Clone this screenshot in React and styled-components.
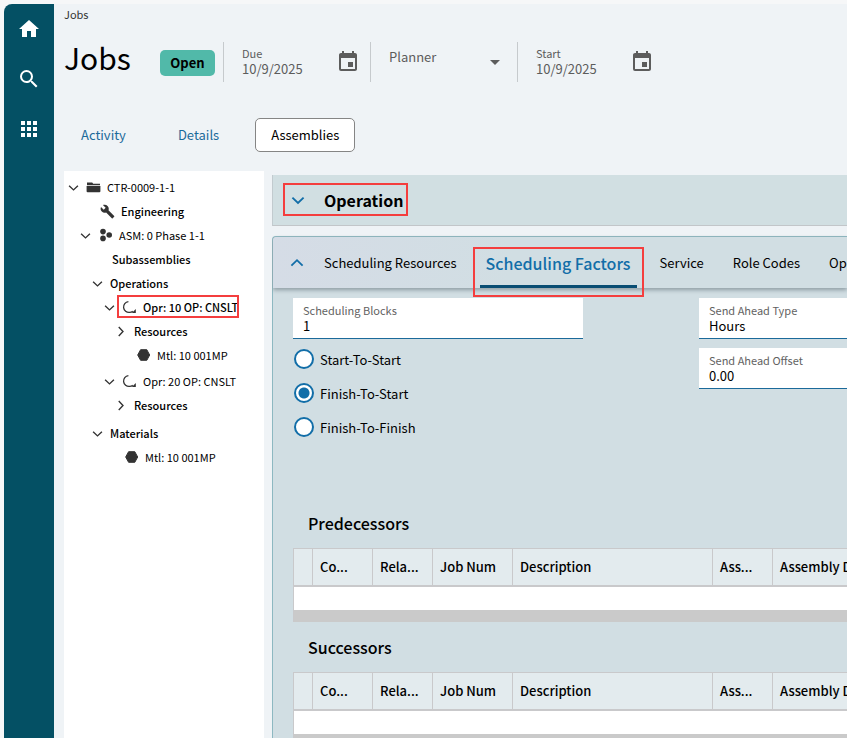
import React, { useState } from "react";
import styled, { createGlobalStyle, css } from "styled-components";
import { MdHome, MdSearch, MdApps, MdEvent, MdArrowDropDown, MdBuild } from "react-icons/md";

const GlobalStyle = createGlobalStyle`
  *, *::before, *::after { box-sizing: border-box; }
  body {
    margin: 0;
    background: #f6f7f8;
    color: #000;
    font-family: "Noto Sans CJK SC", "Noto Sans", sans-serif;
    font-size: 13px;
    line-height: 16px;
  }
  button, input, select { font: inherit; color: inherit; margin: 0; }
  button { cursor: pointer; }
`;

const Shell = styled.div`
  display: flex;
  height: 100vh;
  padding: 4px 0 0 4px;
  overflow: hidden;
`;

const Rail = styled.nav`
  flex: 0 0 50px;
  display: flex;
  flex-direction: column;
  align-items: center;
  gap: 26px;
  padding-top: 13px;
  background: #045064;
  border-top-left-radius: 8px;
`;

const RailButton = styled.button`
  display: flex;
  padding: 0;
  border: 0;
  background: none;
  color: #fff;
`;

const Page = styled.main`
  flex: 1;
  min-width: 0;
  display: flex;
  flex-direction: column;
  padding-left: 10px;
  background: #eff3f6;
`;

const Breadcrumb = styled.a`
  align-self: flex-start;
  font-size: 11px;
  line-height: 20px;
  color: #333;
  text-decoration: none;
`;

const Header = styled.header`
  display: flex;
  align-items: center;
  height: 74px;
  padding-top: 2px;
`;

const Title = styled.h1`
  margin: 0;
  width: 96px;
  font-size: 30px;
  font-weight: 400;
  line-height: 40px;
  padding-bottom: 10px;
`;

const Status = styled.span`
  width: 55px;
  margin: 2px 8px 0 0;
  border-radius: 5px;
  background: #51b9a9;
  font-weight: 700;
  line-height: 26px;
  text-align: center;
`;

const HeaderField = styled.div`
  display: flex;
  align-items: center;
  justify-content: space-between;
  width: 147px;
  height: 40px;
  padding: 0 10px 0 18px;
  border-left: 1px solid #c6cacd;
  color: #5c5c5c;
`;

const HeaderText = styled.div`
  flex: 1;
  min-width: 0;
  align-self: flex-start;
  padding-top: 4px;
`;

const HeaderLabel = styled.label`
  display: block;
  font-size: ${(p) => (p.$large ? 13 : 11)}px;
  line-height: ${(p) => (p.$large ? 22 : 15)}px;
`;

const BareInput = styled.input`
  display: block;
  width: 100%;
  height: 16px;
  padding: 0;
  border: 0;
  outline: 0;
  background: none;
  line-height: 16px;
`;

const PlannerSelect = styled.select`
  width: 24px;
  height: 24px;
  padding: 0;
  border: 0;
  appearance: none;
  background: none;
  grid-area: 1 / 1;
`;

const SelectWrap = styled.span`
  display: grid;
  place-items: center;
  width: 24px;
  svg { grid-area: 1 / 1; pointer-events: none; }
`;

const PlainButton = styled.button`
  display: flex;
  flex: none;
  padding: 0;
  border: 0;
  background: none;
  color: ${(p) => p.$color || "#5c5c5c"};
`;

const PageTabs = styled.nav`
  display: flex;
  gap: 20px;
  margin: 20px 0 19px;
  padding-left: 1px;
`;

const PageTab = styled.button`
  height: 34px;
  padding: 0 15px;
  border: 1px solid transparent;
  border-radius: 5px;
  background: none;
  color: #1b6a9a;
  ${(p) => p.$active && css`
    border-color: #858585;
    background: #fff;
    color: #000;
  `}
`;

const Workspace = styled.div`
  flex: 1;
  min-height: 0;
  display: flex;
  gap: 8px;
`;

const Tree = styled.ul`
  flex: 0 0 200px;
  margin: 0;
  padding: 4px 0 0;
  list-style: none;
  background: #fff;
  font-size: 11px;
`;

const TreeRow = styled.li`
  display: flex;
  align-items: center;
  height: 24px;
  margin-top: ${(p) => p.$space || 0}px;
  padding-left: ${(p) => p.$level * 12}px;
  font-weight: ${(p) => (p.$bold ? 500 : 400)};
  white-space: nowrap;
`;

const Toggle = styled.button`
  display: flex;
  justify-content: center;
  flex: 0 0 18px;
  margin-right: 4px;
  padding: 0;
  border: 0;
  background: none;
  color: #333;
`;

const NodeLabel = styled.span`
  position: relative;
  display: flex;
  align-items: center;
  gap: 6px;
  color: #000;
  svg { flex: none; color: #333; }
`;

const Highlight = styled.span`
  position: absolute;
  inset: ${(p) => p.$inset};
  border: 2px solid #f43e3e;
  pointer-events: none;
`;

const Content = styled.div`
  flex: 1;
  min-width: 0;
  display: flex;
  flex-direction: column;
  gap: 10px;
  padding-top: 4px;
  overflow: hidden;
`;

const OperationPanel = styled.section`
  flex: none;
  display: flex;
  align-items: center;
  height: 51px;
  border-left: 1px solid #c2cbcf;
  border-bottom: 1px solid #c2c6c9;
  background: #d1dfe2;
`;

const OperationHead = styled.div`
  position: relative;
  display: flex;
  align-items: center;
  gap: 19px;
  margin-left: 18px;
`;

const OperationTitle = styled.h2`
  margin: 0;
  font-size: 16px;
  font-weight: 700;
  line-height: 24px;
`;

const DetailPanel = styled.section`
  flex: none;
  border: solid #8db8c1;
  border-width: 1px 0 0 1px;
  border-top-left-radius: 4px;
  background: #d1dee3;
`;

const TabStrip = styled.div`
  display: flex;
  align-items: center;
  height: 51px;
  padding-left: 17px;
  border-top-left-radius: 4px;
  background: linear-gradient(90deg, #d5dce6, #d1dee3 240px);
  box-shadow: 0 2px 4px #8c9ba2;
  white-space: nowrap;
`;

const TabList = styled.div`
  display: flex;
  align-items: stretch;
  gap: 17px;
  height: 51px;
  margin-left: 14px;
`;

const Tab = styled.button`
  position: relative;
  flex: none;
  padding: 3px 6px 0;
  border: 0;
  border-bottom: 3px solid transparent;
  background: none;
  ${(p) => p.$active && css`
    border-bottom-color: #084d73;
    color: #126ea8;
    font-size: 16px;
    font-weight: 500;
  `}
`;

const FieldGrid = styled.div`
  display: grid;
  grid-template-columns: 290px minmax(148px, 1fr);
  column-gap: 116px;
  min-height: 210px;
  padding: 10px 0 0 20px;
`;

const Stack = styled.div`
  display: flex;
  flex-direction: column;
  gap: ${(p) => p.$gap}px;
`;

const Field = styled.div`
  height: 41px;
  padding: 4px 10px 0;
  border-bottom: 1px solid #1b6a9a;
  background: #fff;
  label {
    display: block;
    font-size: 11px;
    line-height: 16px;
    color: #626262;
  }
`;

const RadioRow = styled.label`
  display: flex;
  align-items: center;
  gap: 6px;
  height: 20px;
  padding-left: 1px;
  span { padding-top: 2px; }
`;

const Radio = styled.input`
  appearance: none;
  flex: none;
  width: 20px;
  height: 20px;
  border: 2px solid #126ea8;
  border-radius: 50%;
  background: #fff;
  &:checked { background: radial-gradient(circle, #126ea8 5px, #fff 6px); }
`;

const GridTitle = styled.h3`
  margin: 0;
  padding-left: 35px;
  font-size: 16px;
  font-weight: 500;
  line-height: 50px;
`;

const GridWrap = styled.div`
  margin-left: 20px;
  border: solid #c9c9cb;
  border-width: 1px 0 0 1px;
  overflow: hidden;
`;

const GridTable = styled.table`
  width: 100%;
  min-width: 680px;
  table-layout: fixed;
  border-collapse: separate;
  border-spacing: 0;
  background: #fff;
  th {
    height: 38px;
    padding: 0 0 0 7px;
    border-right: 1px solid #c9c9cb;
    border-bottom: 2px solid #c9c9cb;
    background: #e3ebee;
    font-weight: 500;
    text-align: left;
    white-space: nowrap;
  }
  td { height: 23px; padding: 0; }
`;

const ScrollTrack = styled.div`
  height: 12px;
  background: #cacaca;
`;

function Chevron({ dir = "down", size = 14, weight = 1.6 }) {
  const points = { down: "1.2,4 6,8.6 10.8,4", up: "1.2,8.2 6,3.6 10.8,8.2", right: "3,1.2 7.6,6 3,10.8" }[dir];
  return (
    <svg width={size} height={size} viewBox="0 0 12 12" fill="none" stroke="currentColor" strokeWidth={weight}>
      <polyline points={points} />
    </svg>
  );
}

const icons = {
  folder: (
    <svg width="15" height="14" viewBox="0 0 15 14" fill="currentColor">
      <path d="M1 2.5h5.2l1 1.2H14v1.6H1zM.6 6h13.8v5.2a1 1 0 0 1-1 1H1.6a1 1 0 0 1-1-1z" />
    </svg>
  ),
  wrench: <MdBuild size={15} />,
  assembly: (
    <svg width="15" height="14" viewBox="0 0 15 14" fill="currentColor">
      <circle cx="5" cy="3.6" r="2.8" />
      <circle cx="5" cy="10.4" r="2.8" />
      <circle cx="11.2" cy="7" r="2.8" />
    </svg>
  ),
  operation: (
    <svg width="15" height="14" viewBox="0 0 15 14" fill="none" stroke="currentColor" strokeWidth="1.3">
      <path d="M6.4 1.6A5.3 5.3 0 0 0 7.6 12.4q1.8 0 3.2-1" />
      <path d="M13.8 9v4H9.8z" fill="currentColor" stroke="none" />
    </svg>
  ),
  material: (
    <svg width="15" height="14" viewBox="0 0 15 14" fill="currentColor" stroke="currentColor" strokeLinejoin="round">
      <polygon points="4.6,1.7 10.8,1.7 13.7,7 10.8,12.3 4.6,12.3 1.7,7" />
    </svg>
  ),
};

const nodes = [
  { label: "CTR-0009-1-1", level: 0, icon: "folder", dir: "down" },
  { label: "Engineering", level: 3, icon: "wrench", bold: true },
  { label: "ASM: 0 Phase 1-1", level: 1, icon: "assembly", dir: "down" },
  { label: "Subassemblies", level: 4, bold: true },
  { label: "Operations", level: 2, dir: "down", bold: true },
  { label: "Opr: 10 OP: CNSLT", level: 3, icon: "operation", dir: "down", bold: true, marked: true },
  { label: "Resources", level: 4, dir: "right", bold: true },
  { label: "Mtl: 10 001MP", level: 6, icon: "material" },
  { label: "Opr: 20 OP: CNSLT", level: 3, icon: "operation", dir: "down", space: 2 },
  { label: "Resources", level: 4, dir: "right", bold: true },
  { label: "Materials", level: 2, dir: "down", bold: true, space: 4 },
  { label: "Mtl: 10 001MP", level: 5, icon: "material" },
];

const columns = [
  { label: "", width: 19 },
  { label: "Co...", width: 60 },
  { label: "Rela...", width: 60 },
  { label: "Job Num", width: 80 },
  { label: "Description", width: 200 },
  { label: "Ass...", width: 60 },
  { label: "Assembly Description" },
];

function DateField({ id, label, value }) {
  return (
    <HeaderField>
      <HeaderText>
        <HeaderLabel htmlFor={id}>{label}</HeaderLabel>
        <BareInput id={id} defaultValue={value} />
      </HeaderText>
      <PlainButton aria-label={`Pick ${label} date`}>
        <MdEvent size={24} />
      </PlainButton>
    </HeaderField>
  );
}

function TextField({ id, label, value }) {
  return (
    <Field>
      <label htmlFor={id}>{label}</label>
      <BareInput id={id} defaultValue={value} />
    </Field>
  );
}

function DataGrid({ title }) {
  return (
    <>
      <GridTitle>{title}</GridTitle>
      <GridWrap>
        <GridTable aria-label={title}>
          <colgroup>
            {columns.map((c, i) => <col key={i} width={c.width} />)}
          </colgroup>
          <thead>
            <tr>{columns.map((c, i) => <th key={i} scope="col">{c.label}</th>)}</tr>
          </thead>
          <tbody>
            <tr><td colSpan={columns.length} /></tr>
          </tbody>
        </GridTable>
        <ScrollTrack />
      </GridWrap>
    </>
  );
}

export default function App() {
  const [relation, setRelation] = useState("Finish-To-Start");
  const tabs = ["Scheduling Resources", "Scheduling Factors", "Service", "Role Codes", "Operation"];
  return (
    <>
      <GlobalStyle />
      <Shell>
        <Rail aria-label="Main">
          <RailButton aria-label="Home"><MdHome size={24} /></RailButton>
          <RailButton aria-label="Search"><MdSearch size={24} /></RailButton>
          <RailButton aria-label="Apps"><MdApps size={24} /></RailButton>
        </Rail>
        <Page>
          <Breadcrumb href="#jobs">Jobs</Breadcrumb>
          <Header>
            <Title>Jobs</Title>
            <Status>Open</Status>
            <DateField id="due" label="Due" value="10/9/2025" />
            <HeaderField>
              <HeaderText>
                <HeaderLabel $large htmlFor="planner">Planner</HeaderLabel>
              </HeaderText>
              <SelectWrap>
                <PlannerSelect id="planner"><option value="" /></PlannerSelect>
                <MdArrowDropDown size={24} />
              </SelectWrap>
            </HeaderField>
            <DateField id="start" label="Start" value="10/9/2025" />
          </Header>
          <PageTabs>
            <PageTab>Activity</PageTab>
            <PageTab>Details</PageTab>
            <PageTab $active>Assemblies</PageTab>
          </PageTabs>
          <Workspace>
            <Tree>
              {nodes.map((n, i) => (
                <TreeRow key={i} $level={n.level} $bold={n.bold} $space={n.space}>
                  {n.dir && (
                    <Toggle aria-label={`Toggle ${n.label}`}><Chevron dir={n.dir} size={11} weight={1.5} /></Toggle>
                  )}
                  <NodeLabel>
                    {icons[n.icon]}
                    {n.label}
                    {n.marked && <Highlight $inset="-4px -1px -3px -5px" />}
                  </NodeLabel>
                </TreeRow>
              ))}
            </Tree>
            <Content>
              <OperationPanel>
                <OperationHead>
                  <PlainButton $color="#126ea8" aria-label="Expand Operation"><Chevron /></PlainButton>
                  <OperationTitle>Operation</OperationTitle>
                  <Highlight $inset="-5px -5px -4px -8px" />
                </OperationHead>
              </OperationPanel>
              <DetailPanel>
                <TabStrip>
                  <PlainButton $color="#126ea8" aria-label="Collapse details"><Chevron dir="up" /></PlainButton>
                  <TabList role="tablist">
                    {tabs.map((t, i) => (
                      <Tab key={t} role="tab" aria-selected={i === 1} $active={i === 1}>
                        {t}
                        {i === 1 && <Highlight $inset="10px -7px -12px" />}
                      </Tab>
                    ))}
                  </TabList>
                </TabStrip>
                <FieldGrid>
                  <Stack $gap={10}>
                    <TextField id="blocks" label="Scheduling Blocks" value="1" />
                    <Stack $gap={14}>
                      {["Start-To-Start", "Finish-To-Start", "Finish-To-Finish"].map((r) => (
                        <RadioRow key={r}>
                          <Radio type="radio" name="relation" checked={relation === r} onChange={() => setRelation(r)} />
                          <span>{r}</span>
                        </RadioRow>
                      ))}
                    </Stack>
                  </Stack>
                  <Stack $gap={9}>
                    <TextField id="sendType" label="Send Ahead Type" value="Hours" />
                    <TextField id="sendOffset" label="Send Ahead Offset" value="0.00" />
                  </Stack>
                </FieldGrid>
                <DataGrid title="Predecessors" />
                <DataGrid title="Successors" />
              </DetailPanel>
            </Content>
          </Workspace>
        </Page>
      </Shell>
    </>
  );
}
